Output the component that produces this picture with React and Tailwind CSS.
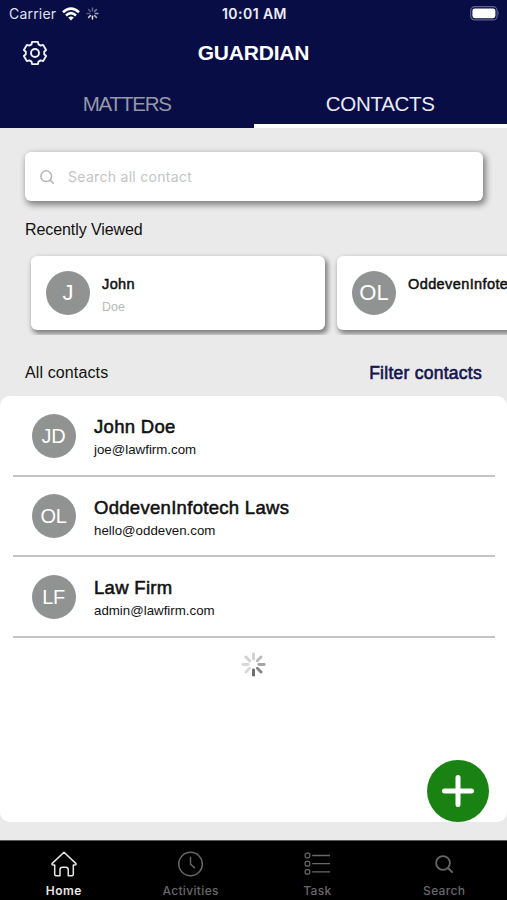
import React, { useState } from "react";

const recentContacts = [
  { id: 1, initials: "J", name: "John", lastName: "Doe" },
  { id: 2, initials: "OL", name: "OddevenInfotech", lastName: "" },
];

const contacts = [
  { id: 1, initials: "JD", name: "John Doe", email: "joe@lawfirm.com" },
  { id: 2, initials: "OL", name: "OddevenInfotech Laws", email: "hello@oddeven.com" },
  { id: 3, initials: "LF", name: "Law Firm", email: "admin@lawfirm.com" },
];

const Spinner = ({ size, color, opacities }) => (
  <svg width={size} height={size} viewBox="0 0 24 24" stroke={color} strokeWidth="2.8" strokeLinecap="round">
    {opacities.map((opacity, i) => (
      <line key={i} x1="12" y1="1.8" x2="12" y2="6.8" opacity={opacity} transform={`rotate(${i * 45} 12 12)`} />
    ))}
  </svg>
);

// Six teeth, each one is two base points and two tip points
const gearPoints = [0, 60, 120, 180, 240, 300]
  .flatMap((angle) => [
    [angle - 22, 9.3],
    [angle - 15, 11.5],
    [angle + 15, 11.5],
    [angle + 22, 9.3],
  ])
  .map(([angle, radius]) => {
    const rad = (angle * Math.PI) / 180;
    return `${(13 + radius * Math.sin(rad)).toFixed(2)},${(13 - radius * Math.cos(rad)).toFixed(2)}`;
  })
  .join(" ");

const GearIcon = () => (
  <svg width="26" height="26" viewBox="0 0 26 26" fill="none" stroke="#eff1fa" strokeWidth="1.9" strokeLinejoin="round">
    <polygon points={gearPoints} />
    <circle cx="13" cy="13" r="4" />
  </svg>
);

const HomeIcon = () => (
  <svg width="26" height="26" viewBox="0 0 26 26" fill="none" stroke="currentColor" strokeWidth="1.5" strokeLinejoin="round" strokeLinecap="round">
    <path d="M13 1.2L25 12.6Q25.3 13.9 24 13.9H22.3V23.6Q22.3 24.8 21.1 24.8H17.2V18.6Q17.2 16.2 14.8 16.2H11.4Q9 16.2 9 18.6V24.8H4.9Q3.7 24.8 3.7 23.6V13.9H2Q0.7 13.9 1 12.6Z" />
  </svg>
);

const ClockIcon = () => (
  <svg width="26" height="26" viewBox="0 0 26 26" fill="none" stroke="currentColor" strokeWidth="1.5" strokeLinecap="round">
    <circle cx="12.5" cy="13" r="11.8" />
    <path d="M12.5 6.5V13.2L16.5 16.6" />
  </svg>
);

const TaskIcon = () => (
  <svg width="26" height="26" viewBox="0 0 26 26" fill="none" stroke="currentColor" strokeWidth="1.3">
    <rect x="1.2" y="2.2" width="4.6" height="4.6" rx="1.6" />
    <rect x="1.2" y="10.4" width="4.6" height="4.6" rx="1.6" />
    <rect x="1.2" y="18.6" width="4.6" height="4.6" rx="1.6" />
    <path d="M8.2 4.5H26M8.2 12.7H26M8.2 20.9H26" />
  </svg>
);

const SearchIcon = ({ size, strokeWidth }) => (
  <svg width={size} height={size} viewBox="0 0 18 18" fill="none" stroke="currentColor" strokeWidth={strokeWidth} strokeLinecap="round">
    <circle cx="8" cy="8" r="6.9" />
    <path d="M13 13L17 17" />
  </svg>
);

const Avatar = ({ initials, className }) => (
  <div className={`flex size-11 shrink-0 items-center justify-center rounded-full bg-[#919393] text-white ${className}`}>
    {initials}
  </div>
);

const navItems = [
  { label: "Home", icon: <HomeIcon />, textClass: "tracking-[0.5px] font-semibold" },
  { label: "Activities", icon: <ClockIcon />, textClass: "tracking-[0.35px] font-medium" },
  { label: "Task", icon: <TaskIcon />, textClass: "tracking-[0.35px] font-medium" },
  { label: "Search", icon: <SearchIcon size={18} strokeWidth={1.8} />, textClass: "tracking-[0.3px] font-medium" },
];

const App = () => {
  const [activeTab, setActiveTab] = useState("CONTACTS");
  const [activeNav, setActiveNav] = useState("Home");

  return (
    <div className="flex h-[900px] w-[507px] flex-col overflow-hidden bg-[#eaeaea] font-['Liberation_Sans',Arial,sans-serif] text-[#111]">
      <header className="flex h-32 shrink-0 flex-col bg-[#080d46]">
        {/* Status bar */}
        <div className="grid h-[27px] grid-cols-3 items-center pr-[7px] pl-[9px] font-[Inter,sans-serif] text-white">
          <div className="flex items-center gap-[6px]">
            <span className="text-[14px] tracking-[0.2px] text-[#dfe1ee]">Carrier</span>
            <svg width="18" height="14" viewBox="0 0 18 14" fill="none" stroke="white" strokeWidth="2.6">
              <path d="M1 5.2Q9 -2 17 5.2" />
              <path d="M4 8.4Q9 4 14 8.4" />
              <path d="M9 13.6L6.2 10.6Q9 8.4 11.8 10.6Z" fill="white" stroke="none" />
            </svg>
            <Spinner size={13} color="#ffffff" opacities={[0.35, 0.45, 0.6, 0.7, 0.9, 0.8, 0.3, 0.3]} />
          </div>
          <span className="text-center text-[14px] font-semibold tracking-[0.45px] whitespace-nowrap text-[#eceef7]">10:01 AM</span>
          <div className="flex justify-end">
            <svg width="30" height="15" viewBox="0 0 30 15" fill="none">
              <rect x="0.7" y="0.7" width="26.4" height="13.2" rx="4" stroke="#5f628f" strokeWidth="1.2" />
              <rect x="2.4" y="2.4" width="23" height="9.8" rx="2.4" fill="white" />
              <path d="M28.3 5.2Q30 7.3 28.3 9.4Z" fill="#6f729a" />
            </svg>
          </div>
        </div>
        <div className="grid h-[51px] grid-cols-[60px_1fr_60px] items-center">
          <button className="pl-[22px]">
            <GearIcon />
          </button>
          <h1 className="pt-px text-center text-[21px] font-bold tracking-[-0.2px] text-white">GUARDIAN</h1>
        </div>
        <div className="grid flex-1 grid-cols-2">
          {["MATTERS", "CONTACTS"].map((tab) => (
            <button
              key={tab}
              onClick={() => setActiveTab(tab)}
              className={`border-b-4 pt-[6px] text-[20.5px] ${
                activeTab === tab ? "border-white tracking-[-0.3px] text-[#e9ebf8]" : "border-[#080d46] tracking-[-1.2px] text-[#9698a6]"
              }`}
            >
              {tab}
            </button>
          ))}
        </div>
      </header>

      <main className="flex flex-1 flex-col">
        <div className="mt-6 mr-[24px] ml-[25px] flex h-[49px] items-center gap-[14px] rounded-md bg-white pl-[15px] shadow-[2px_3px_6px_1px_rgba(0,0,0,0.45)]">
          <span className="text-[#b5b5b5]">
            <SearchIcon size={14} strokeWidth={1.9} />
          </span>
          <span className="font-[Inter,sans-serif] text-sm tracking-[0.3px] text-[#c4c4c6]">Search all contact</span>
        </div>

        <h2 className="mt-[19px] ml-[25px] text-base leading-5 tracking-[-0.08px]">Recently Viewed</h2>

        {/* Horizontal strip, the last card runs off the edge */}
        <div className="mt-[6px] flex h-[89px] gap-3 overflow-hidden pt-[10px] pl-[31px]">
          {recentContacts.map((contact) => (
            <div key={contact.id} className="flex h-[73.5px] w-[294px] shrink-0 items-center gap-3 rounded-md bg-white pl-[15px] shadow-[2px_3px_5px_1px_rgba(0,0,0,0.45)]">
              <Avatar initials={contact.initials} className="text-[22px]" />
              <div className="flex h-[46px] flex-col justify-between pt-[5px]">
                <p className="text-[14.5px] leading-[18px] tracking-[0.4px] [-webkit-text-stroke:0.5px_#111]">{contact.name}</p>
                <p className="h-[18px] text-[12.5px] leading-[18px] text-[#b9b9b9]">{contact.lastName}</p>
              </div>
            </div>
          ))}
        </div>

        <div className="mt-[28px] mr-[25px] ml-[25px] flex h-5 items-center justify-between">
          <h2 className="text-base tracking-[0.12px]">All contacts</h2>
          <button className="text-[17.5px] leading-5 tracking-[0.26px] text-[#14144f] [-webkit-text-stroke:0.6px_#14144f]">Filter contacts</button>
        </div>

        <section className="relative mt-[13px] flex h-[426px] flex-col rounded-[10px] bg-white pr-[12.5px] pl-[13px]">
          {contacts.map((contact) => (
            <div key={contact.id} className="flex h-[80.5px] items-center gap-[18.5px] border-b-2 border-[#c4c4c4] pt-px pl-[18.5px]">
              <Avatar initials={contact.initials} className="text-xl tracking-[-0.3px]" />
              <div className="pt-[5px]">
                <p className="text-[18.5px] leading-6 tracking-[0.3px] [-webkit-text-stroke:0.55px_#111]">{contact.name}</p>
                <p className="text-[13.3px] leading-[22px]">{contact.email}</p>
              </div>
            </div>
          ))}
          <div className="mt-[14px] flex justify-center">
            <Spinner size={25} color="#6b6b6b" opacities={[0.3, 0.45, 0.6, 0.8, 1, 0.25, 0.25, 0.3]} />
          </div>
          <button className="absolute right-[18px] bottom-0 flex size-[62px] items-center justify-center rounded-full bg-[#198212]">
            <svg width="32" height="32" viewBox="0 0 32 32" stroke="white" strokeWidth="5" strokeLinecap="round">
              <path d="M16 2.5V29.5M2.5 16H29.5" />
            </svg>
          </button>
        </section>
      </main>

      <nav className="grid h-[60px] shrink-0 grid-cols-4 border-t border-[#555] bg-black font-[Inter,sans-serif]">
        {navItems.map((item) => (
          <button
            key={item.label}
            onClick={() => setActiveNav(item.label)}
            className={`flex flex-col items-center pt-[10px] pl-px ${activeNav === item.label ? "text-[#e6e6e6]" : "text-[#686868]"}`}
          >
            <span className="flex h-[26px] items-center">{item.icon}</span>
            <span className={`mt-[6px] text-xs leading-4 ${item.textClass}`}>{item.label}</span>
          </button>
        ))}
      </nav>
    </div>
  );
};

export default App;
